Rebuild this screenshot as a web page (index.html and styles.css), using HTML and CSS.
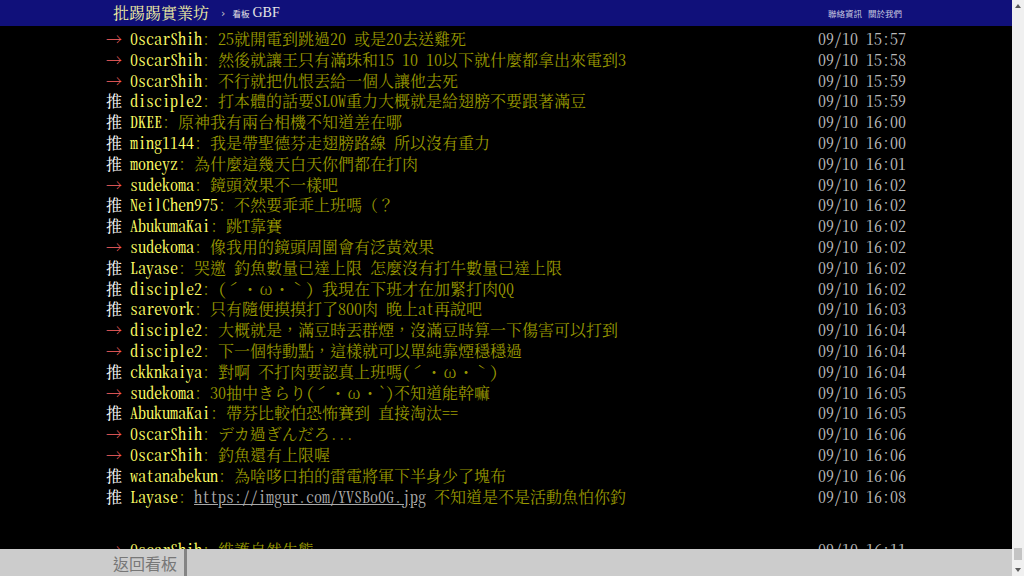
FILE: index.html
```html
<!DOCTYPE html>
<html lang="zh-Hant">
<head>
<meta charset="utf-8">
<title>GBF - 批踢踢實業坊</title>
<link rel="stylesheet" href="styles.css">
</head>
<body>
<div class="page">
  <div class="main">
    <header class="topbar">
      <div class="topbar-inner">
        <a class="logo">批踢踢實業坊</a>
        <span class="chev">›</span>
        <span class="board-label">看板</span>
        <span class="board-name">GBF</span>
        <nav class="right-links"><a>聯絡資訊</a><a>關於我們</a></nav>
      </div>
    </header>
    <main class="content">
      <div class="bbs">
        <div class="push"><span class="tag arrow">→</span><span class="uid">OscarShih</span><span class="msg">: 25就開電到跳過20 或是20去送雞死</span><span class="time">09/10 15:57</span></div>
        <div class="push"><span class="tag arrow">→</span><span class="uid">OscarShih</span><span class="msg">: 然後就讓王只有滿珠和15 10 10以下就什麼都拿出來電到3</span><span class="time">09/10 15:58</span></div>
        <div class="push"><span class="tag arrow">→</span><span class="uid">OscarShih</span><span class="msg">: 不行就把仇恨丟給一個人讓他去死</span><span class="time">09/10 15:59</span></div>
        <div class="push"><span class="tag">推</span><span class="uid">disciple2</span><span class="msg">: 打本體的話要SLOW重力大概就是給翅膀不要跟著滿豆</span><span class="time">09/10 15:59</span></div>
        <div class="push"><span class="tag">推</span><span class="uid">DKEE</span><span class="msg">: 原神我有兩台相機不知道差在哪</span><span class="time">09/10 16:00</span></div>
        <div class="push"><span class="tag">推</span><span class="uid">ming1144</span><span class="msg">: 我是帶聖德芬走翅膀路線 所以沒有重力</span><span class="time">09/10 16:00</span></div>
        <div class="push"><span class="tag">推</span><span class="uid">moneyz</span><span class="msg">: 為什麼這幾天白天你們都在打肉</span><span class="time">09/10 16:01</span></div>
        <div class="push"><span class="tag arrow">→</span><span class="uid">sudekoma</span><span class="msg">: 鏡頭效果不一樣吧</span><span class="time">09/10 16:02</span></div>
        <div class="push"><span class="tag">推</span><span class="uid">NeilChen975</span><span class="msg">: 不然要乖乖上班嗎<span class="fw">（？</span></span><span class="time">09/10 16:02</span></div>
        <div class="push"><span class="tag">推</span><span class="uid">AbukumaKai</span><span class="msg">: 跳T靠賽</span><span class="time">09/10 16:02</span></div>
        <div class="push"><span class="tag arrow">→</span><span class="uid">sudekoma</span><span class="msg">: 像我用的鏡頭周圍會有泛黃效果</span><span class="time">09/10 16:02</span></div>
        <div class="push"><span class="tag">推</span><span class="uid">Layase</span><span class="msg">: 哭邀 釣魚數量已達上限 怎麼沒有打牛數量已達上限</span><span class="time">09/10 16:02</span></div>
        <div class="push"><span class="tag">推</span><span class="uid">disciple2</span><span class="msg">: (<span class="k"><span>ˊ</span><span>・</span><span>ω</span><span>・</span><span>ˋ</span></span>) 我現在下班才在加緊打肉QQ</span><span class="time">09/10 16:02</span></div>
        <div class="push"><span class="tag">推</span><span class="uid">sarevork</span><span class="msg">: 只有隨便摸摸打了800肉 晚上at再說吧</span><span class="time">09/10 16:03</span></div>
        <div class="push"><span class="tag arrow">→</span><span class="uid">disciple2</span><span class="msg">: 大概就是<span class="fw">，</span>滿豆時丟群煙<span class="fw">，</span>沒滿豆時算一下傷害可以打到</span><span class="time">09/10 16:04</span></div>
        <div class="push"><span class="tag arrow">→</span><span class="uid">disciple2</span><span class="msg">: 下一個特動點<span class="fw">，</span>這樣就可以單純靠煙穩穩過</span><span class="time">09/10 16:04</span></div>
        <div class="push"><span class="tag">推</span><span class="uid">ckknkaiya</span><span class="msg">: 對啊 不打肉要認真上班嗎(<span class="k"><span>ˊ</span><span>・</span><span>ω</span><span>・</span><span>ˋ</span></span>)</span><span class="time">09/10 16:04</span></div>
        <div class="push"><span class="tag arrow">→</span><span class="uid">sudekoma</span><span class="msg">: 30抽中きらり(<span class="k"><span>ˊ</span><span>・</span><span>ω</span><span>・</span></span>`)不知道能幹嘛</span><span class="time">09/10 16:05</span></div>
        <div class="push"><span class="tag">推</span><span class="uid">AbukumaKai</span><span class="msg">: 帶芬比較怕恐怖賽到 直接淘汰==</span><span class="time">09/10 16:05</span></div>
        <div class="push"><span class="tag arrow">→</span><span class="uid">OscarShih</span><span class="msg">: デカ過ぎんだろ...</span><span class="time">09/10 16:06</span></div>
        <div class="push"><span class="tag arrow">→</span><span class="uid">OscarShih</span><span class="msg">: 釣魚還有上限喔</span><span class="time">09/10 16:06</span></div>
        <div class="push"><span class="tag">推</span><span class="uid">watanabekun</span><span class="msg">: 為啥哆口拍的雷電將軍下半身少了塊布</span><span class="time">09/10 16:06</span></div>
        <div class="push"><span class="tag">推</span><span class="uid">Layase</span><span class="msg">: <a class="link" href="#">https://imgur.com/YVSBoOG.jpg</a> 不知道是不是活動魚怕你釣</span><span class="time">09/10 16:08</span></div>
        <div class="push push-new"><span class="tag arrow">→</span><span class="uid">OscarShih</span><span class="msg">: 維護自然生態</span><span class="time">09/10 16:11</span></div>
      </div>
    </main>
    <footer class="navbar">
      <div class="navbar-inner">
        <a class="back">返回看板</a>
      </div>
    </footer>
  </div>
  <div class="scrollbar">
    <div class="sb-btn"><svg width="6" height="4" viewBox="0 0 6 4"><path d="M0 4 L3 0 L6 4 Z" fill="#5a5a5a"/></svg></div>
    <div class="sb-track"><div class="sb-thumb"></div></div>
    <div class="sb-btn"><svg width="6" height="4" viewBox="0 0 6 4"><path d="M0 0 L6 0 L3 4 Z" fill="#5a5a5a"/></svg></div>
  </div>
</div>
</body>
</html>
```
FILE: styles.css
```css
* { box-sizing: border-box; }
html, body { margin: 0; height: 100%; }
body { background: #000; overflow: hidden; }
a { text-decoration: none; }

.page { display: flex; height: 576px; }
.main { flex: 1; min-width: 0; display: flex; flex-direction: column; }

/* top bar */
.topbar { flex: none; height: 26px; background: #10107a; }
.topbar-inner {
  width: 800px; margin: 0 auto; height: 100%;
  display: flex; align-items: center;
  padding: 0 4px 0 7px;
}
.logo {
  font-family: "Noto Serif CJK TC", "Noto Sans CJK TC", sans-serif;
  font-size: 16px; color: #f0f0a4; line-height: 1;
}
.chev {
  font-family: "DejaVu Sans", sans-serif;
  color: #c8c8c8; font-size: 11px; margin-left: 12px; line-height: 1;
}
.board-label {
  font-family: "Noto Sans CJK TC", sans-serif;
  font-size: 8.5px; color: #e6e6e6; margin-left: 7px; line-height: 1;
}
.board-name {
  font-family: "Liberation Serif", serif;
  font-size: 14px; color: #e6e6e6; margin-left: 3px; line-height: 1;
}
.right-links { margin-left: auto; display: flex; gap: 6px; }
.right-links a {
  font-family: "Noto Sans CJK TC", sans-serif;
  font-size: 8.5px; color: #c8c8e0;
}

/* content */
.content { flex: 1; min-height: 0; overflow: hidden; }
.bbs {
  width: 800px; margin: 0 auto; padding-top: 3px;
  font-family: "Noto Serif CJK TC", "Noto Sans CJK TC", serif;
  font-feature-settings: "hwid" 1;
  font-size: 16px;
}
.push {
  display: flex; height: 20.8px; line-height: 20.8px;
  white-space: nowrap; color: #999900;
}
.push-new { margin-top: 32.5px; }
.tag { flex: none; width: 24px; color: #ffffff; }
.tag.arrow { color: #ff6666; }
.uid { color: #ffff66; }
.msg { flex: 1; color: #999900; }
.fw { font-feature-settings: normal; }
.k > span {
  display: inline-block; width: 16px; text-align: center;
}
.link { color: #aaaaaa; text-decoration: underline; }
.time { flex: none; color: #bbbbbb; }

/* bottom navigation */
.navbar { flex: none; height: 27px; background: #cccccc; }
.navbar-inner { width: 800px; margin: 0 auto; height: 100%; display: flex; }
.back {
  display: flex; align-items: center;
  padding: 0 7px 0 7px;
  border-right: 3px solid #848484;
  font-family: "Noto Sans CJK TC", sans-serif;
  font-size: 16px; color: #777777;
}

/* scrollbar */
.scrollbar {
  flex: none; width: 12px; background: #f0f0f0;
  display: flex; flex-direction: column; align-items: center;
}
.sb-btn { flex: none; height: 12px; display: flex; align-items: center; justify-content: center; }
.sb-track { flex: 1; display: flex; flex-direction: column; justify-content: flex-end; padding-bottom: 4px; }
.sb-thumb { width: 8px; height: 12px; background: #c4c4c4; }
```
